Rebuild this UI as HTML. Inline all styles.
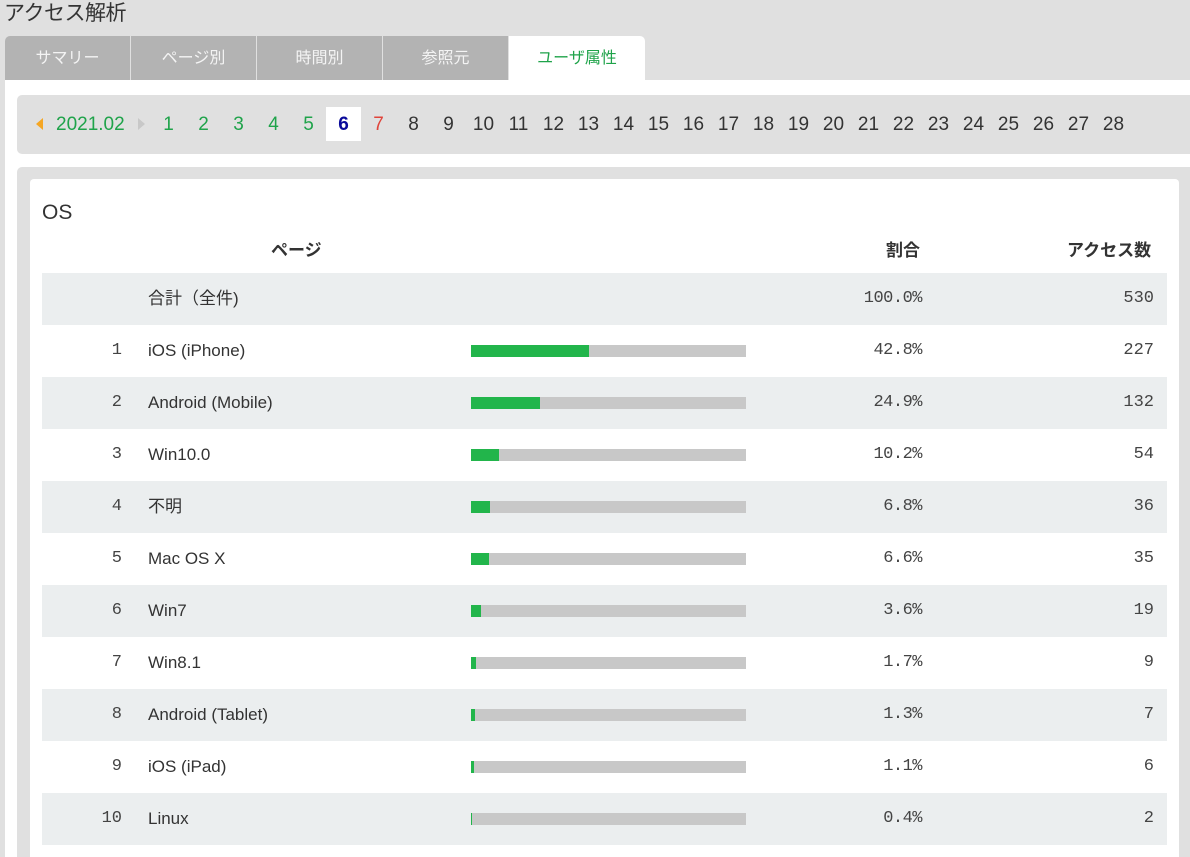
<!DOCTYPE html>
<html><head><meta charset="utf-8"><style>
*{margin:0;padding:0;box-sizing:border-box}
body{width:1190px;height:857px;overflow:hidden;background:#e0e0e0;font-family:"Liberation Sans","Noto Sans CJK JP",sans-serif;position:relative;color:#333}
.a{position:absolute}
h1{position:absolute;left:4px;top:0;font-size:21px;font-weight:normal;color:#333;line-height:28px;letter-spacing:-0.5px}
.tab{position:absolute;top:36px;height:44px;background:#b3b3b3;color:#f4f4f4;font-size:16px;line-height:46px;text-align:center}
.main{position:absolute;left:5px;top:80px;width:1185px;height:777px;background:#fff}
.nav{position:absolute;left:17px;top:95px;width:1173px;height:59px;background:#e0e0e0;border-radius:5px 0 0 5px}
.d{position:absolute;top:107px;height:34px;width:35px;line-height:36px;text-align:center;font-size:19px;color:#333}
.panel{position:absolute;left:17px;top:167px;width:1173px;height:690px;background:#e0e0e0;border-radius:5px 0 0 0}
.card{position:absolute;left:30px;top:179px;width:1149px;height:678px;background:#fff;border-radius:4px 4px 0 0}
.row{position:absolute;left:42px;width:1125px;height:52px;font-size:17px;line-height:52px}
.row.s{background:#ebeeef}
.n{position:absolute;right:1045px;font-family:"Liberation Mono",monospace;font-size:17px;color:#444}
.nm{position:absolute;left:106px}
.bar{position:absolute;left:429px;top:20px;width:275px;height:12px;background:#c8c8c8}
.bar i{display:block;height:12px;background:#22b54b}
.p{position:absolute;right:245px;font-family:"Liberation Mono",monospace;font-size:17px;color:#444;letter-spacing:-0.5px}
.c{position:absolute;right:13px;font-family:"Liberation Mono",monospace;font-size:17px;color:#444}
</style></head><body>
<h1>アクセス解析</h1>
<div class="tab" style="left:5px;width:125px;border-radius:5px 0 0 0">サマリー</div>
<div class="tab" style="left:131px;width:125px">ページ別</div>
<div class="tab" style="left:257px;width:125px">時間別</div>
<div class="tab" style="left:383px;width:125px">参照元</div>
<div class="main"></div>
<div class="tab" style="left:509px;width:136px;background:#fff;color:#1fa34a;border-radius:0 5px 0 0">ユーザ属性</div>
<div class="nav"></div>
<div class="a" style="left:36px;top:118px;width:0;height:0;border-top:6px solid transparent;border-bottom:6px solid transparent;border-right:7px solid #f5a623"></div>
<div class="a" style="left:56px;top:107px;line-height:36px;font-size:19px;color:#1fa34a">2021.02</div>
<div class="a" style="left:138px;top:118px;width:0;height:0;border-top:6px solid transparent;border-bottom:6px solid transparent;border-left:7px solid #c8c8c8"></div>
<div class="d" style="left:151px;color:#1fa34a">1</div>
<div class="d" style="left:186px;color:#1fa34a">2</div>
<div class="d" style="left:221px;color:#1fa34a">3</div>
<div class="d" style="left:256px;color:#1fa34a">4</div>
<div class="d" style="left:291px;color:#1fa34a">5</div>
<div class="d" style="left:326px;background:#fff;color:#0a0a9a;font-weight:bold">6</div>
<div class="d" style="left:361px;color:#e0443a">7</div>
<div class="d" style="left:396px">8</div>
<div class="d" style="left:431px">9</div>
<div class="d" style="left:466px">10</div>
<div class="d" style="left:501px">11</div>
<div class="d" style="left:536px">12</div>
<div class="d" style="left:571px">13</div>
<div class="d" style="left:606px">14</div>
<div class="d" style="left:641px">15</div>
<div class="d" style="left:676px">16</div>
<div class="d" style="left:711px">17</div>
<div class="d" style="left:746px">18</div>
<div class="d" style="left:781px">19</div>
<div class="d" style="left:816px">20</div>
<div class="d" style="left:851px">21</div>
<div class="d" style="left:886px">22</div>
<div class="d" style="left:921px">23</div>
<div class="d" style="left:956px">24</div>
<div class="d" style="left:991px">25</div>
<div class="d" style="left:1026px">26</div>
<div class="d" style="left:1061px">27</div>
<div class="d" style="left:1096px">28</div>
<div class="panel"></div>
<div class="card"></div>
<div class="a" style="left:42px;top:199px;font-size:21px;line-height:28px;color:#333">OS</div>
<div class="a" style="left:271px;top:239px;font-size:17px;font-weight:bold;line-height:24px">ページ</div>
<div class="a" style="left:886px;top:239px;font-size:17px;font-weight:bold;line-height:24px">割合</div>
<div class="a" style="left:1067px;top:239px;font-size:17px;font-weight:bold;line-height:24px">アクセス数</div>
<div class="row s" style="top:273px"><span class="nm">合計（全件)</span><span class="p">100.0%</span><span class="c">530</span></div>
<div class="row" style="top:325px"><span class="n">1</span><span class="nm">iOS (iPhone)</span><div class="bar"><i style="width:118px"></i></div><span class="p">42.8%</span><span class="c">227</span></div>
<div class="row s" style="top:377px"><span class="n">2</span><span class="nm">Android (Mobile)</span><div class="bar"><i style="width:69px"></i></div><span class="p">24.9%</span><span class="c">132</span></div>
<div class="row" style="top:429px"><span class="n">3</span><span class="nm">Win10.0</span><div class="bar"><i style="width:28px"></i></div><span class="p">10.2%</span><span class="c">54</span></div>
<div class="row s" style="top:481px"><span class="n">4</span><span class="nm">不明</span><div class="bar"><i style="width:19px"></i></div><span class="p">6.8%</span><span class="c">36</span></div>
<div class="row" style="top:533px"><span class="n">5</span><span class="nm">Mac OS X</span><div class="bar"><i style="width:18px"></i></div><span class="p">6.6%</span><span class="c">35</span></div>
<div class="row s" style="top:585px"><span class="n">6</span><span class="nm">Win7</span><div class="bar"><i style="width:10px"></i></div><span class="p">3.6%</span><span class="c">19</span></div>
<div class="row" style="top:637px"><span class="n">7</span><span class="nm">Win8.1</span><div class="bar"><i style="width:5px"></i></div><span class="p">1.7%</span><span class="c">9</span></div>
<div class="row s" style="top:689px"><span class="n">8</span><span class="nm">Android (Tablet)</span><div class="bar"><i style="width:4px"></i></div><span class="p">1.3%</span><span class="c">7</span></div>
<div class="row" style="top:741px"><span class="n">9</span><span class="nm">iOS (iPad)</span><div class="bar"><i style="width:3px"></i></div><span class="p">1.1%</span><span class="c">6</span></div>
<div class="row s" style="top:793px"><span class="n">10</span><span class="nm">Linux</span><div class="bar"><i style="width:1px"></i></div><span class="p">0.4%</span><span class="c">2</span></div>
</body></html>
